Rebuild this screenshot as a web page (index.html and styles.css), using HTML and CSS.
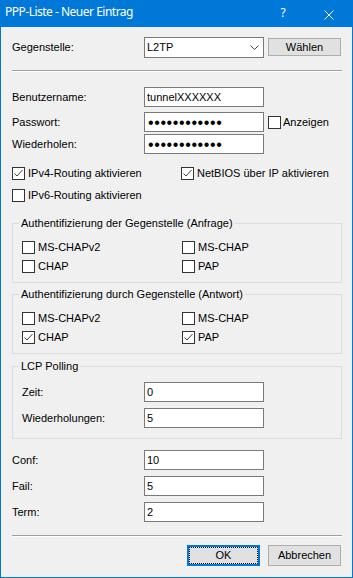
FILE: index.html
```html
<!DOCTYPE html>
<html lang="de">
<head>
<meta charset="utf-8">
<title>PPP-Liste - Neuer Eintrag</title>
<link rel="stylesheet" href="styles.css">
</head>
<body>
<div class="window">
  <div class="titlebar">
    <div class="title">PPP-Liste - Neuer Eintrag</div>
    <div class="tb-btn tb-help">?</div>
    <div class="tb-btn tb-close">
      <svg width="10" height="10" viewBox="0 0 10 10"><path d="M0.5 0.5 L9.5 9.5 M9.5 0.5 L0.5 9.5" stroke="#fff" stroke-width="1" fill="none"/></svg>
    </div>
  </div>
  <div class="content">
    <div class="row row-gegen">
      <div class="lbl">Gegenstelle:</div>
      <div class="combo">
        <span>L2TP</span>
        <svg class="chev" width="9" height="5" viewBox="0 0 9 5"><path d="M0.5 0.5 L4.5 4.5 L8.5 0.5" stroke="#404040" stroke-width="1" fill="none"/></svg>
      </div>
      <div class="btn btn-choose">Wählen</div>
    </div>
    <div class="sep sep-top"></div>

    <div class="row field f-user">
      <div class="lbl">Benutzername:</div>
      <div class="inp">tunnelXXXXXX</div>
    </div>
    <div class="row field f-pass">
      <div class="lbl">Passwort:</div>
      <div class="inp pw">••••••••••••</div>
      <div class="chk chk-show"><span class="box"></span><span class="ctext">Anzeigen</span></div>
    </div>
    <div class="row field f-rep">
      <div class="lbl">Wiederholen:</div>
      <div class="inp pw">••••••••••••</div>
    </div>

    <div class="checks top-checks">
      <div class="chk"><span class="box"><svg width="11" height="11" viewBox="0 0 11 11"><path d="M1.5 5.5 L4 8 L9.5 2" stroke="#404040" stroke-width="1" fill="none"/></svg></span><span class="ctext">IPv4-Routing aktivieren</span></div>
      <div class="chk"><span class="box"><svg width="11" height="11" viewBox="0 0 11 11"><path d="M1.5 5.5 L4 8 L9.5 2" stroke="#404040" stroke-width="1" fill="none"/></svg></span><span class="ctext">NetBIOS über IP aktivieren</span></div>
      <div class="chk"><span class="box"></span><span class="ctext">IPv6-Routing aktivieren</span></div>
    </div>

    <div class="grp grp-a">
      <div class="legend">Authentifizierung der Gegenstelle (Anfrage)</div>
      <div class="checks grp-checks">
        <div class="chk"><span class="box"></span><span class="ctext">MS-CHAPv2</span></div>
        <div class="chk"><span class="box"></span><span class="ctext">MS-CHAP</span></div>
        <div class="chk"><span class="box"></span><span class="ctext">CHAP</span></div>
        <div class="chk"><span class="box"></span><span class="ctext">PAP</span></div>
      </div>
    </div>

    <div class="grp grp-b">
      <div class="legend">Authentifizierung durch Gegenstelle (Antwort)</div>
      <div class="checks grp-checks">
        <div class="chk"><span class="box"></span><span class="ctext">MS-CHAPv2</span></div>
        <div class="chk"><span class="box"></span><span class="ctext">MS-CHAP</span></div>
        <div class="chk"><span class="box"><svg width="11" height="11" viewBox="0 0 11 11"><path d="M1.5 5.5 L4 8 L9.5 2" stroke="#404040" stroke-width="1" fill="none"/></svg></span><span class="ctext">CHAP</span></div>
        <div class="chk"><span class="box"><svg width="11" height="11" viewBox="0 0 11 11"><path d="M1.5 5.5 L4 8 L9.5 2" stroke="#404040" stroke-width="1" fill="none"/></svg></span><span class="ctext">PAP</span></div>
      </div>
    </div>

    <div class="grp grp-lcp">
      <div class="legend">LCP Polling</div>
      <div class="row field g-f1">
        <div class="lbl">Zeit:</div>
        <div class="inp">0</div>
      </div>
      <div class="row field g-f2">
        <div class="lbl">Wiederholungen:</div>
        <div class="inp">5</div>
      </div>
    </div>

    <div class="row field f-conf">
      <div class="lbl">Conf:</div>
      <div class="inp">10</div>
    </div>
    <div class="row field f-fail">
      <div class="lbl">Fail:</div>
      <div class="inp">5</div>
    </div>
    <div class="row field f-term">
      <div class="lbl">Term:</div>
      <div class="inp">2</div>
    </div>

    <div class="sep sep-bottom"></div>

    <div class="row buttons">
      <div class="btn btn-ok">OK</div>
      <div class="btn btn-cancel">Abbrechen</div>
    </div>
  </div>
</div>
</body>
</html>
```

FILE: styles.css
```css
* { box-sizing: border-box; }
html, body { margin: 0; padding: 0; }
body {
  background: #ffffff;
  font-family: "Liberation Sans", Arial, sans-serif;
  font-size: 11px;
  line-height: 13px;
  color: #000;
}
.window {
  width: 353px;
  height: 578px;
  border: 1px solid #0078d7;
  background: #f0f0f0;
  display: flex;
  flex-direction: column;
  overflow: hidden;
}
.titlebar {
  height: 26px;
  flex-shrink: 0;
  background: #0078d7;
  color: #fff;
  display: flex;
}
.title {
  flex: 1;
  font-family: "Noto Sans", sans-serif;
  font-size: 12px;
  line-height: 16px;
  letter-spacing: -0.5px;
  padding: 3px 0 0 4px;
}
.tb-btn {
  width: 46px;
  height: 26px;
  display: flex;
  align-items: center;
  justify-content: center;
}
.tb-help {
  font-family: "Noto Sans", sans-serif;
  font-size: 12px;
  line-height: 16px;
  padding-bottom: 2px;
}
.tb-close { padding-top: 1px; }
.tb-close svg { display: block; }

.content {
  padding: 0 10px 0 11px;
}
.row { display: flex; align-items: center; }
.lbl { width: 132px; flex-shrink: 0; }

.row-gegen { margin-top: 10px; height: 21px; align-items: flex-start; }
.row-gegen .lbl { align-self: center; }
.combo {
  width: 120px;
  height: 21px;
  border: 1px solid #7a7a7a;
  background: #fff;
  display: flex;
  align-items: center;
  padding-left: 2px;
}
.chev { margin-left: auto; margin-right: 4px; display: block; }

.btn {
  background: #e1e1e1;
  border: 1px solid #adadad;
  display: flex;
  align-items: center;
  justify-content: center;
  width: 73px;
}
.btn-choose { margin-left: 4px; margin-top: 1px; height: 18px; }

.sep {
  height: 2px;
  flex-shrink: 0;
  border-top: 1px solid #a0a0a0;
  border-bottom: 1px solid #ffffff;
}
.sep-top { margin-top: 12px; }
.sep-bottom { margin-top: 13px; }

.field { height: 20px; }
.inp {
  width: 120px;
  height: 20px;
  border: 1px solid #7a7a7a;
  background: #fff;
  padding-left: 2px;
  display: flex;
  align-items: center;
  flex-shrink: 0;
}
.pw {
  font-size: 16px;
  letter-spacing: 0.6px;
  padding-left: 3px;
  padding-top: 1px;
}
.f-user { margin-top: 15px; }
.f-pass { margin-top: 5px; }
.f-rep { margin-top: 2px; }

.chk { display: flex; align-items: center; height: 13px; }
.box {
  width: 13px;
  height: 13px;
  border: 1px solid #333;
  background: #fff;
  flex-shrink: 0;
}
.box svg { display: block; }
.ctext { margin-left: 3px; white-space: nowrap; }
.chk-show { margin-left: 4px; }
.chk-show .ctext { margin-left: 2px; }

.checks { display: grid; }
.top-checks {
  margin-top: 13px;
  grid-template-columns: 169px auto;
  row-gap: 9px;
}

.grp {
  border: 1px solid #dcdcdc;
}
.legend {
  display: block;
  width: max-content;
  height: 13px;
  margin-top: -7px;
  margin-left: 6px;
  padding: 0 2px;
  background: #f0f0f0;
}
.grp-a { margin-top: 21px; }
.grp-b { margin-top: 11px; }
.grp-checks {
  margin-top: 11px;
  padding: 0 0 9px 9px;
  grid-template-columns: 160px auto;
  row-gap: 6px;
}
.grp-lcp { margin-top: 12px; padding: 0 0 10px 9px; }
.grp-lcp .legend { margin-left: -3px; }
.grp-lcp .lbl { width: 122px; }
.g-f1 { margin-top: 9px; }
.g-f2 { margin-top: 6px; }

.f-conf { margin-top: 11px; }
.f-fail { margin-top: 6px; }
.f-term { margin-top: 6px; }

.buttons {
  margin-top: 8px;
  justify-content: flex-end;
  padding-right: 1px;
  gap: 8px;
}
.buttons .btn { height: 21px; }
.btn-ok {
  border: 2px solid #0078d7;
  outline: 1px dotted #000;
  outline-offset: -3px;
}
```
